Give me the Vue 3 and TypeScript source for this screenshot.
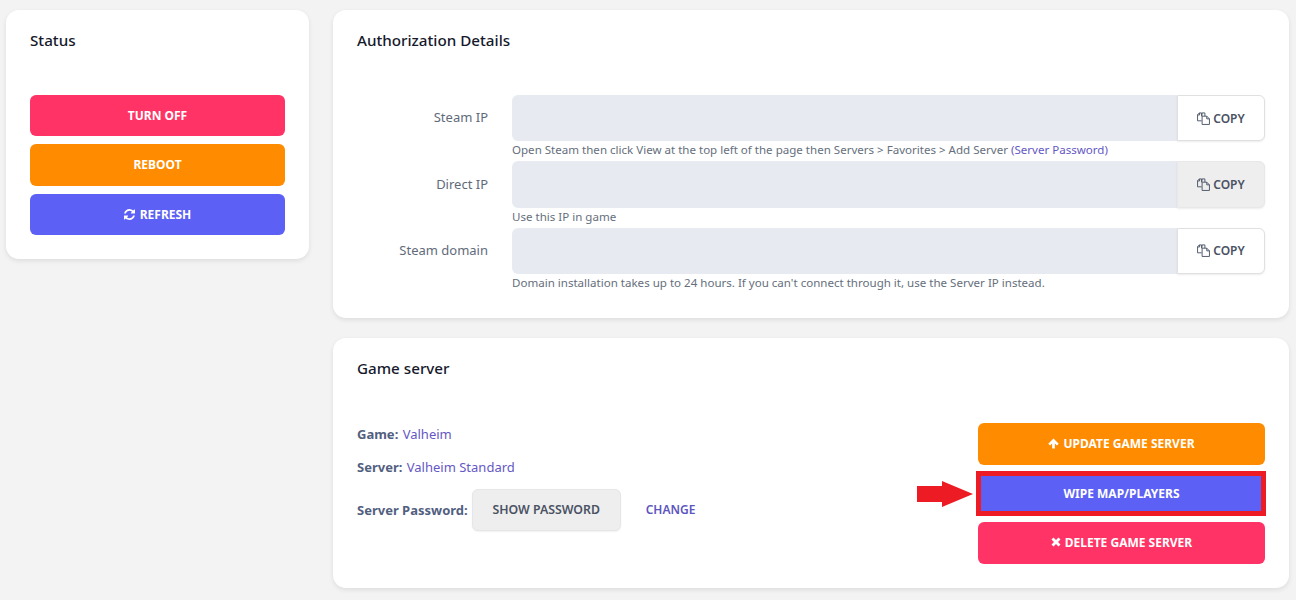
<script setup lang="ts">
const fields = [
  { label: 'Steam IP', hint: 'Open Steam then click View at the top left of the page then Servers > Favorites > Add Server ', link: '(Server Password)', hover: false },
  { label: 'Direct IP', hint: 'Use this IP in game', link: '', hover: true },
  { label: 'Steam domain', hint: "Domain installation takes up to 24 hours. If you can't connect through it, use the Server IP instead.", link: '', hover: false },
]
const refreshPath = 'M1511 928q0 5-1 7-64 268-268 434.5t-478 166.5q-146 0-282.5-55t-243.5-157l-129 129q-19 19-45 19t-45-19-19-45v-448q0-26 19-45t45-19h448q26 0 45 19t19 45-19 45l-137 137q71 66 161 102t187 36q134 0 250-65t186-179q11-17 53-117 8-23 30-23h192q13 0 22.5 9.5t9.5 22.5zm25-800v448q0 26-19 45t-45 19h-448q-26 0-45-19t-19-45 19-45l138-138q-148-137-349-137-134 0-250 65t-186 179q-11 17-53 117-8 23-30 23h-199q-13 0-22.5-9.5t-9.5-22.5v-7q65-268 270-434.5t480-166.5q146 0 284 55.5t245 156.5l130-129q19-19 45-19t45 19 19 45z'
</script>

<template>
  <div class="page">
    <aside class="card status">
      <h2 class="title">Status</h2>
      <div class="stack">
        <button class="btn danger">TURN OFF</button>
        <button class="btn warning">REBOOT</button>
        <button class="btn primary wide-gap">
          <svg class="ico" viewBox="0 0 1536 1536" width="11" height="11"><path fill="currentColor" :d="refreshPath" /></svg>
          REFRESH
        </button>
      </div>
    </aside>

    <main class="main">
      <section class="card auth">
        <h2 class="title">Authorization Details</h2>
        <div class="form">
          <div v-for="f in fields" :key="f.label" class="row">
            <label class="label">{{ f.label }}</label>
            <div class="control">
              <div class="group">
                <div class="input"></div>
                <button class="copy" :class="{ hover: f.hover }">
                  <svg class="copy-ico" viewBox="0 0 14 14" width="13" height="13" fill="none" stroke="currentColor" stroke-width="1">
                    <path d="M5 4.500V1H2.500L.6 2.900V9.500H5" />
                    <path d="M8.500 4.500V1H5.500L5 4.500" />
                    <path d="M.6 3.200H2.800V1" />
                    <path d="M5.500 4.500H10.500L13.400 7.400V13.400H5.500Z" />
                    <path d="M10.500 4.500V7.400H13.400" />
                  </svg>
                  COPY
                </button>
              </div>
              <p class="hint">{{ f.hint }}<a v-if="f.link" class="link">{{ f.link }}</a></p>
            </div>
          </div>
        </div>
      </section>

      <section class="card game">
        <h2 class="title">Game server</h2>
        <div class="game-body">
          <div class="info">
            <p class="line"><b>Game:</b> <a class="link">Valheim</a></p>
            <p class="line"><b>Server:</b> <a class="link">Valheim Standard</a></p>
            <div class="pass">
              <b>Server Password:</b>
              <button class="show">SHOW PASSWORD</button>
              <a class="change">CHANGE</a>
            </div>
          </div>
          <div class="actions">
            <button class="btn warning lift">
              <svg class="ico" viewBox="0 0 12 12" width="11" height="11"><path fill="currentColor" d="M6 .5 11.700 6.200 9.700 8.200 7.500 6V11.500H4.500V6L2.300 8.200.3 6.200Z" /></svg>
              UPDATE GAME SERVER
            </button>
            <div class="marked">
              <button class="btn primary">WIPE MAP/PLAYERS</button>
              <span class="frame"></span>
              <svg class="arrow" viewBox="0 0 56 26" width="56" height="26"><path fill="#ed1c24" d="M0 5H25V0L56 13 25 26V21H0Z" /></svg>
            </div>
            <button class="btn danger lift">
              <svg class="ico" viewBox="0 0 12 12" width="10" height="10"><path fill="currentColor" d="M3 .6 6 3.600 9 .6 11.400 3 8.400 6 11.400 9 9 11.400 6 8.400 3 11.400.6 9 3.600 6 .6 3Z" /></svg>
              DELETE GAME SERVER
            </button>
          </div>
        </div>
      </section>
    </main>
  </div>
</template>

<style>
html, body { background: #f3f3f3; }
</style>

<style scoped>
* { box-sizing: border-box; }
.page {
  display: flex;
  gap: 24px;
  align-items: flex-start;
  height: 600px;
  overflow: hidden;
  padding: 10px 7px 0 6px;
  background: #f3f3f3;
  font-family: "Noto Sans", "Open Sans", sans-serif;
  font-size: 13px;
  color: #525f7f;
}
.card {
  background: #fff;
  border-radius: 13px;
  box-shadow: 0 2px 5px rgba(0, 0, 0, 0.09);
  padding: 20px 24px;
}
.title {
  margin: 0;
  font-size: 15.200px;
  font-weight: 500;
  line-height: 21px;
  color: #16192c;
}
.status { width: 303px; height: 249px; flex: none; }
.stack { display: flex; flex-direction: column; gap: 8px; margin-top: 44px; }
.stack .btn { height: 41.330px; }
.main { flex: 1; display: flex; flex-direction: column; gap: 20px; }
.btn {
  display: flex;
  align-items: center;
  justify-content: center;
  gap: 4px;
  width: 100%;
  height: 42px;
  border: 0;
  border-radius: 6px;
  padding: 0;
  font: 700 12px "Noto Sans", sans-serif;
  color: #fff;
}
.btn.lift { padding-bottom: 2px; }
.wide-gap { gap: 5px; }
.danger { background: #ff3366; }
.warning { background: #ff8c00; }
.primary { background: #5c60f5; }
.auth { height: 308px; }
.form { margin-top: 44px; display: flex; flex-direction: column; gap: 5px; }
.row { display: flex; height: 61.400px; }
.label {
  width: 131px;
  flex: none;
  padding-top: 13.400px;
  text-align: right;
  font-size: 13px;
  line-height: 18px;
  color: #5f6b7a;
}
.control { margin-left: 24px; flex: 1; }
.group { display: flex; height: 46.400px; }
.input { flex: 1; background: #e7eaf0; border-radius: 6px 0 0 6px; }
.copy {
  width: 88px;
  display: flex;
  align-items: center;
  justify-content: center;
  gap: 3px;
  background: #fff;
  border: 1px solid #e0e0e0;
  border-radius: 0 6px 6px 0;
  box-shadow: 0 1px 2px rgba(0, 0, 0, 0.08);
  font: 600 12px "Noto Sans", sans-serif;
  color: #4a5263;
  padding: 0;
}
.copy.hover { background: #eeeeee; border-color: #e8e8e8; }
.copy-ico { flex: none; }
.hint {
  margin: 1px 0 0;
  font-size: 11.550px;
  line-height: 15px;
  color: #666f7d;
  white-space: nowrap;
}
.link { color: #6558c4; }
.game { height: 250px; }
.game-body { display: flex; justify-content: space-between; margin-top: 44px; }
.info { padding-top: 2px; }
.line { margin: 0 0 15px; line-height: 18px; }
.line b, .pass b { font-weight: 700; color: #525f7f; margin-right: 1px; }
.pass { display: flex; align-items: center; margin-top: -2px; }
.show {
  margin-left: 3px;
  width: 149px;
  height: 41.500px;
  border: 1px solid #e6e6e6;
  border-radius: 6px;
  background: #eeeeee;
  box-shadow: 0 1px 2px rgba(0, 0, 0, 0.06);
  font: 600 12.300px "Noto Sans", sans-serif;
  color: #4a5263;
  padding: 0;
}
.change { margin-left: 25px; font-size: 12px; font-weight: 600; color: #5c55c0; }
.actions { width: 287px; display: flex; flex-direction: column; gap: 7.500px; }
.marked { position: relative; }
.frame {
  position: absolute;
  inset: -2px -1px -1px -2px;
  border: 5px solid #ed1c24;
  pointer-events: none;
}
.arrow { position: absolute; left: -61px; top: 8px; }
</style>
